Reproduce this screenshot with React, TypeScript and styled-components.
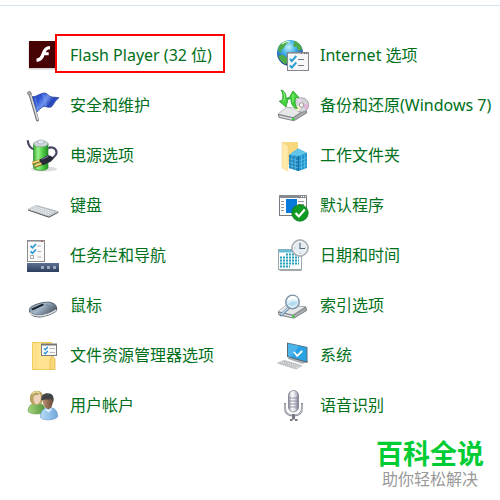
import React from "react";
import styled, { createGlobalStyle } from "styled-components";

const GlobalStyle = createGlobalStyle`
  * { box-sizing: border-box; }
  body {
    margin: 0;
    background: #fff;
    font-family: "Noto Sans", "Noto Sans CJK SC", sans-serif;
  }
`;

const Page = styled.main`
  padding-top: 5px;
`;

const Divider = styled.hr`
  height: 1px;
  margin: 0 0 24px;
  border: 0;
  background: #d6e3f3;
`;

const Items = styled.ul`
  display: grid;
  grid-template-columns: repeat(2, minmax(0, 1fr));
  margin: 0;
  padding: 0;
  list-style: none;
`;

const Item = styled.li`
  position: relative;
  display: flex;
  align-items: center;
  height: 50px;
  padding-left: 27px;
`;

const ItemLink = styled.a`
  display: flex;
  align-items: center;
  gap: 11px;
  color: #00701a;
  font-size: 16px;
  line-height: 24px;
  text-decoration: none;
  white-space: nowrap;
`;

const Highlight = styled.span`
  position: absolute;
  top: 4px;
  left: 55px;
  width: 170px;
  height: 39px;
  border: 2px solid #ff0000;
  pointer-events: none;
`;

const Icon = styled.svg`
  flex: none;
  width: 32px;
  height: 32px;
  overflow: visible;
`;

const Footer = styled.footer`
  display: flex;
  flex-direction: column;
  align-items: center;
  width: fit-content;
  margin: 8px 16px 0 auto;
`;

const Brand = styled.strong`
  color: #00cc33;
  font-size: 27px;
  font-weight: 700;
  line-height: 32px;
`;

const Slogan = styled.span`
  color: #999;
  font-size: 16px;
  line-height: 18px;
`;

const FlashIcon = () => (
  <Icon viewBox="0 0 32 32" aria-hidden="true">
    <rect x="1.5" y="2.6" width="28.5" height="28" fill="#bbb" opacity=".6" />
    <rect x="2" y="2" width="28" height="27" fill="#470203" />
    <path d="M23 7v3.300c-2.500 0-3.200.8-4.200 3h2.900v3h-4.200c-1.500 4-3.600 6.500-8 6.500v-3.200c3.100-.3 4-2.200 5.300-5.500C16.400 10 18.500 7 23 7Z" fill="#fff" />
  </Icon>
);

const FlagIcon = () => (
  <Icon viewBox="0 0 32 32" aria-hidden="true">
    <defs>
      <linearGradient id="flag" x1="0" y1="0" x2="1" y2=".5">
        <stop offset="0" stopColor="#2342b4" />
        <stop offset=".35" stopColor="#3157d6" />
        <stop offset=".55" stopColor="#6f94ec" />
        <stop offset=".75" stopColor="#2745bb" />
        <stop offset="1" stopColor="#3d63d6" />
      </linearGradient>
    </defs>
    <path d="M4.500 7.500C9 8.500 12 4.500 17.500 4c3 0 4 3.500 7.500 4 2.500.4 4.500.2 7 .7-2.500 1.800-4 3.800-5.500 6.300-1 1.800-1.800 3.200-3.800 3.300-3 .2-5-2-8 .2-2.500 1.700-4 4.500-6.200 5.800Z" fill="url(#flag)" stroke="#1d3694" strokeWidth=".7" />
    <path d="M15.500 5c2.500 4 3.500 9 3.200 12.500M8 8.500l3 12" fill="none" stroke="#8fb0f6" strokeWidth=".8" opacity=".65" />
    <path d="M2.800 4.500 10.500 31" stroke="#747579" strokeWidth="3" strokeLinecap="round" />
    <path d="M3.300 5 10.700 30.500" stroke="#dadbdd" strokeWidth="1.400" strokeLinecap="round" />
    <circle cx="2.300" cy="4.200" r="1.800" fill="#aaa" stroke="#77787b" strokeWidth=".7" />
  </Icon>
);

const PowerIcon = () => (
  <Icon viewBox="0 0 32 32" aria-hidden="true">
    <defs>
      <linearGradient id="cell">
        <stop offset="0" stopColor="#38a532" />
        <stop offset=".3" stopColor="#9af28a" />
        <stop offset=".65" stopColor="#4ccc43" />
        <stop offset="1" stopColor="#238c29" />
      </linearGradient>
    </defs>
    <ellipse cx="17" cy="30" rx="13" ry="2.500" fill="#bbb" opacity=".5" />
    <path d="M.8 1.200C1 6 2.500 9 7.500 10.500M21 9.500c3-2.600 8-.6 8.500 3.500.5 4-4 5.500-6 8" fill="none" stroke="#464660" strokeWidth="2.200" />
    <path d="M6.500 4.500v24c0 3.800 14.500 3.800 14.500 0v-24Z" fill="url(#cell)" stroke="#278e2b" strokeWidth=".7" />
    <ellipse cx="13.800" cy="4.800" rx="7.200" ry="3" fill="#cfd8d9" stroke="#8b9c9b" strokeWidth=".7" />
    <path d="M10.800 4V1.900c0-1.200 6-1.200 6 0V4c0 1.200-6 1.200-6 0Z" fill="#e2e9f0" stroke="#92a0b2" strokeWidth=".6" />
    <path d="m12.500 20.500 7.700-4.100c1.500-.5 4.800.8 6.300 2.600l-2.500 3.500-7.800 3.700c-2.400-.4-4-2.500-3.700-5.700Z" fill="#282a39" />
    <path d="m14.500 20.200 6.500-2.800" stroke="#72758d" strokeWidth="1.200" />
    <path d="m5.200 24.200 7.300-2.300M7.800 27.300l7-2.600" stroke="#84611b" strokeWidth="3" />
    <path d="m5.200 23.800 7-2.200M7.800 26.800l6.500-2.400" stroke="#f2d880" strokeWidth="1.800" />
  </Icon>
);

const KeyboardIcon = () => (
  <Icon viewBox="0 0 32 32" aria-hidden="true">
    <path d="m1 20.300 21 7 9.300-4.800v1.300l-9.300 5L1 21.500Z" fill="#555b61" />
    <path d="m1 20.200 8-4 22.300 6.300-9.300 5Z" fill="#c5cbd0" stroke="#a5abb0" strokeWidth=".4" />
    <path d="m4 19.900 17.800 5.800M6.200 18.700l18 5.700M8.300 17.500l18.200 5.400" stroke="#edf0f2" strokeWidth="1.200" strokeDasharray="1.800 .7" />
    <path d="m10 17 18.500 5.300" stroke="#9ca4aa" strokeWidth=".6" />
  </Icon>
);

const TaskbarIcon = () => (
  <Icon viewBox="0 0 32 32" aria-hidden="true">
    <defs>
      <linearGradient id="bar" x2="0" y2="1">
        <stop offset="0" stopColor="#5d7192" />
        <stop offset="1" stopColor="#2c3d5d" />
      </linearGradient>
    </defs>
    <rect x=".5" y="1.500" width="17" height="21" fill="#fafafa" stroke="#8b8b8b" />
    <path d="M1 2.500h16" stroke="#bbb" />
    <path d="M14 2.300h2" stroke="#b84c45" />
    <path d="m3.500 6.800 2 2L9 5M3.500 12.300l2 2 3.500-3.800" fill="none" stroke="#2d9bd5" strokeWidth="1.800" />
    <path d="M10.500 7h3.500M10.500 12.500h3.500M10.500 18h3.500" stroke="#b0b0b0" />
    <rect x="3.500" y="16.500" width="3" height="3" fill="#fff" stroke="#aaa" />
    <path d="M0 24h32v9H0Z" fill="url(#bar)" />
    <path d="M14 27h3v3h-3ZM20 27h3v3h-3ZM26 27h3v3h-3Z" fill="#9daabd" />
  </Icon>
);

const MouseIcon = () => (
  <Icon viewBox="0 0 32 32" aria-hidden="true">
    <defs>
      <linearGradient id="mouse" x2="1" y2=".5">
        <stop offset="0" stopColor="#8096ab" />
        <stop offset=".5" stopColor="#a1b5c9" />
        <stop offset="1" stopColor="#53606f" />
      </linearGradient>
    </defs>
    <path d="M2 20.500C2.500 17 9 14.200 17 13c4.500-.6 7.500-.2 10.500 1.700 2.500 1.600 3 4.500 2.500 7-3 3.200-10.500 6-17.500 6.800C6 28.500 1.500 25 2 20.500Z" fill="#4d5560" />
    <path d="M3 23.500c2 2.600 6 3.500 10.400 3.500 6.400-1 12-3.500 16-6" fill="none" stroke="#d9dde1" strokeWidth="1.600" />
    <path d="M2.500 20.300C3.500 17.300 10 14.700 17.300 13.700c4-.5 7-.2 9.700 1.500 1.500 1 2.200 2.300 2.300 3.800-2 3-9 6-16 7C7.500 25.700 2.200 23.700 2.500 20.300Z" fill="url(#mouse)" />
    <path d="m5.800 21.300 11.500-5.400-1.900-1.200L4.800 19.500c-.7.600-.3 1.500 1 1.800Z" fill="#1b2027" />
    <path d="M18.500 15.700c3.200.8 5 2.600 5.500 5" fill="none" stroke="#64768a" strokeWidth=".7" />
  </Icon>
);

const ExplorerIcon = () => (
  <Icon viewBox="0 0 32 32" aria-hidden="true">
    <path d="M5 3h20v28H5Z" fill="#f2cd5c" />
    <path d="M6 4h19v26H6Z" fill="#ffe391" />
    <path d="M23 30.500V21l2.500-4.500L28 20v10.500Z" fill="#f7d778" stroke="#e4b94b" strokeWidth=".8" />
    <path d="M9 4v26" stroke="#ffda79" />
    <rect x="14.500" y="5.500" width="15" height="11" fill="#fafafa" stroke="#777c82" />
    <path d="M14 5.500h16" stroke="#777" strokeWidth="2" />
    <path d="m17 9.400 1.300 1.300 2.500-2.700M17 13.400l1.300 1.300 2.500-2.700" fill="none" stroke="#238fd1" strokeWidth="1.300" />
    <path d="M22.500 9.500H28M22.500 13.500H28" stroke="#bbb" />
  </Icon>
);

const UsersIcon = () => (
  <Icon viewBox="0 0 32 32" aria-hidden="true">
    <defs>
      <linearGradient id="greenShirt"><stop stopColor="#a5d37d" /><stop offset="1" stopColor="#51953b" /></linearGradient>
      <linearGradient id="blueShirt"><stop stopColor="#b7dcf7" /><stop offset="1" stopColor="#6fa6dc" /></linearGradient>
      <linearGradient id="darkFace"><stop stopColor="#bd9277" /><stop offset="1" stopColor="#684631" /></linearGradient>
    </defs>
    <path d="M1 22.500c0-6 4-8.800 9-8.800s8.500 3.500 8.500 8.800c-3 3.300-15 3.300-17.500 0Z" fill="url(#greenShirt)" stroke="#6b984f" strokeWidth=".6" />
    <path d="M3.200 12.500C2 6 4.800 1.800 9.700 1.800c4.500 0 7 3.500 6.500 8.200l-2 5-8 1Z" fill="#b8a260" />
    <path d="M7 6.500c3 0 4.500-.7 6-2 1.800 4 .7 9.800-3 11-3.200-.2-4.200-5.500-3-9Z" fill="#eed3b8" />
    <path d="M5 4.700C8 2.300 11 3 12.500 4" fill="none" stroke="#eee2a5" strokeWidth="1.200" />
    <path d="M13.500 28.500c0-7 3-10 8.500-10s8.300 3 8.800 9c-2.800 4-14 4.500-17.300 1Z" fill="url(#blueShirt)" stroke="#628fc0" strokeWidth=".6" />
    <path d="M15.500 11c-.3-4 2.300-6 6-6 4 0 5.500 3.300 4.500 7.500-.7 4-1.800 7.500-4.500 7.500-3.300 0-5.700-4.500-6-9Z" fill="url(#darkFace)" />
    <path d="M14.500 11.500c-1-5 2.300-7.300 6.100-7.300 4.300-.1 7.300 3 5.500 9.200l-1.700-3.500c-3 .8-7 .2-9.900 1.600Z" fill="#424345" />
    <path d="m18.500 20 3 2.500 3-3" fill="none" stroke="#edf8ff" strokeWidth="1.500" />
  </Icon>
);

const InternetIcon = () => (
  <Icon viewBox="0 0 32 32" aria-hidden="true">
    <defs>
      <radialGradient id="globe" cx=".45" cy=".28" r=".75">
        <stop offset="0" stopColor="#c2f1ff" />
        <stop offset=".35" stopColor="#4bb5e7" />
        <stop offset=".7" stopColor="#2265b7" />
        <stop offset="1" stopColor="#16327e" />
      </radialGradient>
    </defs>
    <circle cx="13" cy="14" r="13" fill="url(#globe)" />
    <path d="M2 7c3-4 6-5.500 10-5-1 2.500-4 3.500-5 6.500-1.200 2-3.500 2.300-3.500 5.500L1 11ZM3 16c4 0 7 2 8 5l-2 4.500C5 24 2 20 1.500 17ZM17 1.600c4 1.200 7 4.400 8.300 8.400l-3.600 2-2-4.500-3 .5c-1.500-2 1.500-3.700.3-6.400Z" fill="#4eab47" />
    <path d="M5 5c3-2.500 6-2.700 8-2" fill="none" stroke="#dffbde" strokeWidth="1.200" />
    <rect x="10.500" y="13.500" width="21" height="18" fill="#f7f7f8" stroke="#85878e" />
    <path d="M11 14.500h20" stroke="#b8bac0" />
    <path d="M24 14.500h1M27 14.500h1M29 14.500h1" stroke="#5f6268" />
    <path d="m12.800 20 2 2 4.500-5M12.800 26.500l2 2 4.500-5" fill="none" stroke="#2c9ed4" strokeWidth="1.900" />
    <path d="M21 20.500h6M21 26.500h6" stroke="#777b85" />
  </Icon>
);

const Drive = ({ top }: { top: number }) => (
  <g transform={`translate(0 ${top})`}>
    <path d="m1 24 9-7 19 1.500 1 4L17.500 30H15L2 27Z" fill="#777c7e" />
    <path d="m1 23.500 8.500-6.700 19 2L16 27Z" fill="#e6e8e8" stroke="#999da0" strokeWidth=".6" />
    <path d="m1.300 24 14.500 3.400L29 19.300v3.500L17 30.300 2 27Z" fill="#a9adb0" stroke="#70777b" strokeWidth=".6" />
    <path d="m2.500 25.500 12.700 3" stroke="#eee" />
    <path d="M15 27.500h2.500v2H15Z" fill="#34ce32" />
  </g>
);

const BackupIcon = () => (
  <Icon viewBox="0 0 32 32" aria-hidden="true">
    <Drive top={1.5} />
    <circle cx="24.500" cy="16" r="7.200" fill="#d4d4db" stroke="#8b8b8b" strokeWidth=".8" />
    <path d="m24.500 16-5-5a7 7 0 0 1 4-2Z" fill="#eed5f0" />
    <path d="m24.500 16 7-1a7 7 0 0 1-2 6Z" fill="#ddb3d8" />
    <path d="m24.500 16-3 6.400a7 7 0 0 1-4-5Z" fill="#fff4d1" />
    <circle cx="24.500" cy="16" r="2.300" fill="#f5f5f5" stroke="#888" strokeWidth=".8" />
    <path d="M4 1c3 .5 5.500 4 5 8.500l2.500-1L9 18l-6.800-5.800 3-.8C6.500 7.500 6 4 4 1Z" fill="#43d43c" stroke="#219623" strokeWidth=".8" />
    <path d="M20.500 19.500c-4-.4-7-4.500-6.500-10l-2.500.7L16 2l6 6.500-3.300.5c-1.500 4-.5 7.500 1.800 10.500Z" fill="#43d43c" stroke="#219623" strokeWidth=".8" />
    <path d="M6.500 3.500c1.500 3 1.300 6.500 0 9M16 5v8" fill="none" stroke="#a3f69a" strokeWidth=".8" />
  </Icon>
);

const WorkFolderIcon = () => (
  <Icon viewBox="0 0 32 32" aria-hidden="true">
    <path d="M5 3h16v22H5Z" fill="#f8d87e" />
    <path d="m5 3 6 4v25l-6-3Z" fill="#ffe9a8" stroke="#ecd18a" strokeWidth=".5" />
    <path d="m12 16 9-6.500 9 4.500v15l-8.500 3L12 29Z" fill="#2494cc" />
    <path d="m12 16 9-6.500 9 4.500-8.500 3Z" fill="#62c5e9" />
    <path d="m12 16 9.500 2.500V32L12 29Z" fill="#2083bd" />
    <path d="m12 19.500 9.500 2.500 8.500-3M12 23l9.500 2.500 8.500-3M12 26.500l9.500 2.500 8.500-3M15 17v13M18.300 17.800V31M24.500 17v14M27.500 16v14M15 14l10 2.500M18 12l10 3M24 11l-9.500 6M27 12.500l-8 5" fill="none" stroke="#65c8ec" strokeWidth=".65" />
    <path d="M21.500 17v15" stroke="#196a9d" />
  </Icon>
);

const DefaultsIcon = () => (
  <Icon viewBox="0 0 32 32" aria-hidden="true">
    <rect x="2.500" y="6.500" width="27" height="20" fill="#fbfbfb" stroke="#777c82" />
    <path d="M2 7.500h28" stroke="#858a91" strokeWidth="3" />
    <path d="M24 7.500h1M26 7.500h1M28 7.500h1" stroke="#fff" />
    <path d="M9 10h11v14H9Z" fill="#087bda" />
    <path d="M4 12.500h3M4 15.500h3M4 18.500h3M4 21.500h3M21 12.500h6M21 15.500h6" stroke="#999" />
    <circle cx="23" cy="24" r="8.200" fill="#109b24" stroke="#087818" strokeWidth=".8" />
    <path d="m18.500 24 3.300 3.400 6-6.800" fill="none" stroke="#fff" strokeWidth="2.300" />
  </Icon>
);

const DateIcon = () => (
  <Icon viewBox="0 0 32 32" aria-hidden="true">
    <path d="M2.500 31.500h22" stroke="#aaa" />
    <rect x="1.500" y="10.500" width="23" height="20" fill="#fbfcfc" stroke="#9aa8ad" />
    <path d="M2 12h22" stroke="#66bed6" strokeWidth="3" />
    <path d="M9 15.500h13M3 18.500h19M3 21.500h19M3 24.500h19M3 27.500h10" stroke="#229fbd" strokeWidth="2" strokeDasharray="2 1" />
    <circle cx="23" cy="9" r="8.400" fill="#b5babf" stroke="#9a9fa4" strokeWidth=".7" />
    <circle cx="23" cy="9" r="6.600" fill="#e5edf2" stroke="#f8f8f8" />
    <path d="M23 4v5.500h5" fill="none" stroke="#526778" strokeWidth="1.100" />
    <path d="M23 3.500v1M17.500 9h1M23 14v1M28 9h1" stroke="#7e8b95" strokeWidth=".7" />
  </Icon>
);

const IndexIcon = () => (
  <Icon viewBox="0 0 32 32" aria-hidden="true">
    <Drive top={-1} />
    <path d="m11.500 19-7.200 7" stroke="#6f8dab" strokeWidth="3" strokeLinecap="round" />
    <path d="m11 19-6.500 6.500" stroke="#c2dff2" strokeWidth="1.200" strokeLinecap="round" />
    <circle cx="15.500" cy="13" r="6.700" fill="#dbf0fa" stroke="#8397ab" strokeWidth="1.600" />
    <path d="M10.500 12c0-3 2.500-5 5.500-5 2.500 0 5 1.600 5 4-3.500-1-7-1-10.500 1Z" fill="#fff" />
    <path d="M11 15c3-3 6-3 9.500-2-1.500 4-6.500 5.500-9.500 2Z" fill="#a0d1e9" opacity=".7" />
  </Icon>
);

const SystemIcon = () => (
  <Icon viewBox="0 0 32 32" aria-hidden="true">
    <path d="m11 19.500 5-1.800 14.500 4.600-5 2.200Z" fill="#afb5ba" stroke="#858c91" strokeWidth=".5" />
    <path d="M10 3.500 30.500 8v16L10 18Z" fill="#5e6a73" />
    <path d="m11 4.600 18.500 4v13.900L11 17.200Z" fill="#28a2e2" />
    <path d="M11 4.600 22 7l-8 11-3-.8Z" fill="#6cc5ef" opacity=".55" />
    <path d="m17 13 3.200 4 5-5" fill="none" stroke="#fff" strokeWidth="1.800" />
    <path d="m.5 24 6.500-2.600 18 5.300-6 3.300Z" fill="#e3e6e8" stroke="#9ea5a9" strokeWidth=".6" />
    <path d="m3 24.200 16 4.400M5 23.300l16 4.400M7 22.300l16 4.400" stroke="#9ba2a7" strokeWidth=".9" strokeDasharray="1.500 .8" />
  </Icon>
);

const SpeechIcon = () => (
  <Icon viewBox="0 0 32 32" aria-hidden="true">
    <defs>
      <linearGradient id="mic">
        <stop offset="0" stopColor="#8c8d9e" />
        <stop offset=".35" stopColor="#fff" />
        <stop offset=".65" stopColor="#d5d6df" />
        <stop offset="1" stopColor="#777788" />
      </linearGradient>
    </defs>
    <path d="M8 14v5c0 5 3.500 7.500 8.500 7.500S25 24 25 19v-5" fill="none" stroke="#8b8d99" strokeWidth="2" />
    <path d="M8 15v5c.8 4.500 4 6 8.500 6s8-1.500 8.500-6v-5" fill="none" stroke="#e0e1e7" strokeWidth=".7" />
    <rect x="11.500" y="1.500" width="10" height="21.500" rx="5" fill="url(#mic)" stroke="#7c7e8b" strokeWidth=".8" />
    <path d="M12 9h9M12 12h9M12 15h9M12 18h9" stroke="#85879a" strokeWidth=".8" />
    <path d="M13 5h7M12.500 7h8" stroke="#fff" strokeWidth=".7" strokeDasharray="1 1" />
    <path d="M15 25h3v5.500h-3ZM13 30h2.500v2H13ZM18 30h2.500v2H18Z" fill="#777987" />
  </Icon>
);

interface Entry {
  icon: React.ComponentType;
  text: string;
  marked?: boolean;
}

const entries: Entry[] = [
  { icon: FlashIcon, text: "Flash Player (32 位)", marked: true },
  { icon: InternetIcon, text: "Internet 选项" },
  { icon: FlagIcon, text: "安全和维护" },
  { icon: BackupIcon, text: "备份和还原(Windows 7)" },
  { icon: PowerIcon, text: "电源选项" },
  { icon: WorkFolderIcon, text: "工作文件夹" },
  { icon: KeyboardIcon, text: "键盘" },
  { icon: DefaultsIcon, text: "默认程序" },
  { icon: TaskbarIcon, text: "任务栏和导航" },
  { icon: DateIcon, text: "日期和时间" },
  { icon: MouseIcon, text: "鼠标" },
  { icon: IndexIcon, text: "索引选项" },
  { icon: ExplorerIcon, text: "文件资源管理器选项" },
  { icon: SystemIcon, text: "系统" },
  { icon: UsersIcon, text: "用户帐户" },
  { icon: SpeechIcon, text: "语音识别" },
];

export default function App() {
  return (
    <Page lang="zh-CN">
      <GlobalStyle />
      <Divider />
      <Items>
        {entries.map(({ icon: EntryIcon, text, marked }) => (
          <Item key={text}>
            <ItemLink href="#">
              <EntryIcon />
              <span>{text}</span>
            </ItemLink>
            {marked && <Highlight />}
          </Item>
        ))}
      </Items>
      <Footer>
        <Brand>百科全说</Brand>
        <Slogan>助你轻松解决</Slogan>
      </Footer>
    </Page>
  );
}
